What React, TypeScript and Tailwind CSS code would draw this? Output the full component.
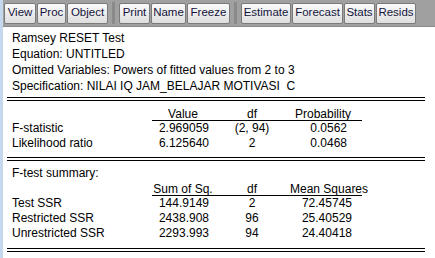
const buttons1 = [
  { label: 'View', w: 'w-[32px]' },
  { label: 'Proc', w: 'w-[29px]' },
  { label: 'Object', w: 'w-[41px]' },
];
const buttons2 = [
  { label: 'Print', w: 'w-[31px]' },
  { label: 'Name', w: 'w-[35px]' },
  { label: 'Freeze', w: 'w-[43px]' },
];
const buttons3 = [
  { label: 'Estimate', w: 'w-[50px]' },
  { label: 'Forecast', w: 'w-[51px]' },
  { label: 'Stats', w: 'w-[31px]' },
  { label: 'Resids', w: 'w-[40px]' },
];

function ToolButton({ label, w }: { label: string; w: string }) {
  return (
    <div
      className={`${w} h-[21px] flex items-center justify-center rounded-[2px] border border-[#7a7a7a] bg-gradient-to-b from-[#fafafa] to-[#dedede] text-[11.5px] text-[#14143c] leading-none`}
    >
      {label}
    </div>
  );
}

function Separator() {
  return (
    <div className="w-[7px] h-[22px] mx-[1px] flex justify-center">
      <div className="w-[3px] h-full bg-[#8a8a8a]" />
    </div>
  );
}

function DoubleLine() {
  return <div className="ml-[4px] w-[418px] h-[4px] border-t border-b border-black" />;
}

const Row = ({ children }: { children: React.ReactNode }) => (
  <div className="flex h-[15px] leading-[15px] whitespace-nowrap">{children}</div>
);

function HeadRow({ children }: { children: React.ReactNode }) {
  return (
    <div className="flex whitespace-nowrap">
      <div className="w-[140px]" />
      <div className="flex h-[13px] leading-[12px] border-b border-black">{children}</div>
    </div>
  );
}

export default function App() {
  return (
    <div
      className="w-[435px] h-[258px] flex bg-white text-black overflow-hidden"
      style={{ fontFamily: '"Liberation Sans", Arial, sans-serif' }}
    >
      <div className="w-[3px] h-full bg-[#c4d8ee]" />
      <div className="flex-1 flex flex-col">
        <div className="h-[27px] flex items-center gap-[1px] pl-[1px] bg-[#a0a0a0] border-b border-[#8c8c8c]">
          {buttons1.map((b) => (
            <ToolButton key={b.label} {...b} />
          ))}
          <Separator />
          {buttons2.map((b) => (
            <ToolButton key={b.label} {...b} />
          ))}
          <Separator />
          {buttons3.map((b) => (
            <ToolButton key={b.label} {...b} />
          ))}
        </div>

        <div className="text-[12px] pt-[3px]">
          <div className="pl-[9px] leading-[16px] whitespace-nowrap">
            <div>Ramsey RESET Test</div>
            <div>Equation: UNTITLED</div>
            <div>Omitted Variables: Powers of fitted values from 2 to 3</div>
            <div>Specification: NILAI IQ JAM_BELAJAR MOTIVASI&nbsp; C</div>
          </div>
          <div className="mt-[3px]">
            <DoubleLine />
          </div>

          <div className="pl-[9px] pt-[7px]">
            <HeadRow>
              <div className="w-[62px] text-center">Value</div>
              <div className="w-[76px] text-center">df</div>
              <div className="w-[72px] text-center pr-[6px]">Probability</div>
            </HeadRow>
            <Row>
              <div className="w-[140px]">F-statistic</div>
              <div className="w-[62px] text-right pr-[5px]">2.969059</div>
              <div className="w-[76px] text-center">(2, 94)</div>
              <div className="w-[72px] text-right pr-[15px]">0.0562</div>
            </Row>
            <Row>
              <div className="w-[140px]">Likelihood ratio</div>
              <div className="w-[62px] text-right pr-[5px]">6.125640</div>
              <div className="w-[76px] text-center">2</div>
              <div className="w-[72px] text-right pr-[15px]">0.0468</div>
            </Row>
          </div>
          <div className="mt-[6px]">
            <DoubleLine />
          </div>

          <div className="pl-[9px] pt-[5px]">
            <Row>
              <div>F-test summary:</div>
            </Row>
            <div className="mt-[2px]">
              <HeadRow>
                <div className="w-[62px] text-center">Sum of Sq.</div>
                <div className="w-[76px] text-center">df</div>
                <div className="w-[72px] text-left">Mean Squares</div>
              </HeadRow>
            </div>
            <Row>
              <div className="w-[140px]">Test SSR</div>
              <div className="w-[62px] text-right pr-[5px]">144.9149</div>
              <div className="w-[76px] text-center">2</div>
              <div className="w-[72px] text-right pr-[10px]">72.45745</div>
            </Row>
            <Row>
              <div className="w-[140px]">Restricted SSR</div>
              <div className="w-[62px] text-right pr-[5px]">2438.908</div>
              <div className="w-[76px] text-center">96</div>
              <div className="w-[72px] text-right pr-[10px]">25.40529</div>
            </Row>
            <Row>
              <div className="w-[140px]">Unrestricted SSR</div>
              <div className="w-[62px] text-right pr-[5px]">2293.993</div>
              <div className="w-[76px] text-center">94</div>
              <div className="w-[72px] text-right pr-[10px]">24.40418</div>
            </Row>
          </div>
          <div className="mt-[7px]">
            <DoubleLine />
          </div>
        </div>
      </div>
    </div>
  );
}
